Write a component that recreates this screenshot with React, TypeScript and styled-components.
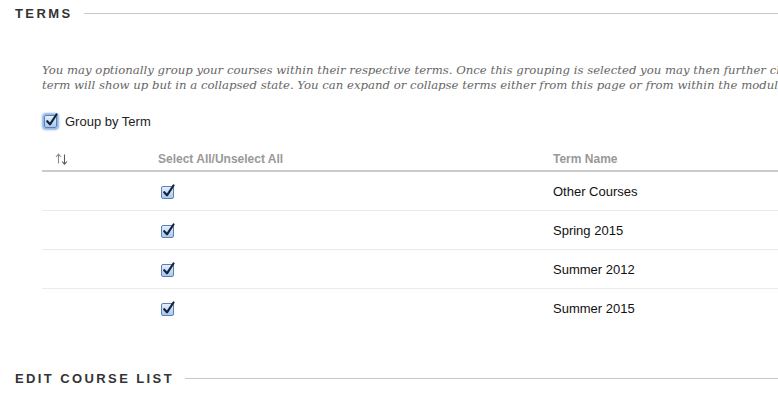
import React from "react";
import styled, { createGlobalStyle } from "styled-components";

const Global = createGlobalStyle`
  html, body { margin: 0; padding: 0; background: #fff; }
  body { width: 778px; height: 395px; overflow: hidden; font-family: "Liberation Sans", Arial, sans-serif; }
`;

const Page = styled.div`
  width: 778px;
  overflow: hidden;
  padding-top: 6px;
`;

const Section = styled.section`
  display: flex;
  flex-direction: column;
`;

const SectionHead = styled.div`
  display: flex;
  align-items: center;
  gap: 11px;
  padding-left: 15px;
  height: 16px;
`;

const SectionTitle = styled.h2`
  margin: 0;
  font-family: "Liberation Sans", Arial, sans-serif;
  font-weight: bold;
  font-size: 13px;
  letter-spacing: 2.4px;
  color: #333;
  white-space: nowrap;
  line-height: 16px;
`;

const Rule = styled.div`
  flex: 1;
  height: 1px;
  background: #c8c8c8;
  margin-top: -1px;
`;

const Body = styled.div`
  padding-left: 42px;
  width: 760px;
`;

const Description = styled.p`
  margin: 41px 0 0;
  font-family: "DejaVu Serif", Georgia, serif;
  font-style: italic;
  font-size: 11.7px;
  line-height: 15px;
  color: #666;
  white-space: nowrap;
`;

const CheckLabel = styled.label`
  display: flex;
  align-items: center;
  gap: 8px;
  margin-top: 20px;
  margin-left: 2px;
  font-size: 13px;
  color: #222;
  height: 16px;
`;

const Box = styled.span<{ $focus?: boolean }>`
  position: relative;
  display: inline-block;
  width: 11px;
  height: 11px;
  border: 1px solid #5b7fb3;
  border-radius: 2px;
  background: linear-gradient(#e4effc, #a9c9ef);
  box-shadow: ${(p) => (p.$focus ? "0 0 2px 2px #8fb4e6" : "none")};
  flex: none;
`;

const Tick = styled.svg`
  position: absolute;
  left: 0px;
  top: -3px;
  width: 13px;
  height: 14px;
`;

const Check = ({ focus }: { focus?: boolean }) => (
  <Box $focus={focus}>
    <Tick viewBox="0 0 13 14">
      <path d="M2.2 8.2 L5 11.3 L11.5 1.5" fill="none" stroke="#15253f" strokeWidth="2.2" strokeLinecap="round" strokeLinejoin="round" />
    </Tick>
  </Box>
);

const Table = styled.div`
  margin-top: 15px;
  display: grid;
  grid-template-columns: 116px 395px 1fr;
`;

const HeadRow = styled.div`
  display: contents;
`;

const HeadCell = styled.div`
  box-sizing: border-box;
  height: 28px;
  padding-top: 3px;
  border-bottom: 2px solid #cbcbcb;
  display: flex;
  align-items: center;
  font-size: 12px;
  font-weight: bold;
  color: #999;
`;

const SortCell = styled(HeadCell)`
  padding-left: 13px;
`;

const Row = styled.div`
  display: contents;
`;

const Cell = styled.div<{ $last?: boolean }>`
  height: 39px;
  box-sizing: border-box;
  border-bottom: 1px solid ${(p) => (p.$last ? "transparent" : "#ebebeb")};
  display: flex;
  align-items: center;
  font-size: 13px;
  color: #111;
`;

const CheckCell = styled(Cell)`
  padding-left: 3px;
  padding-top: 2px;
`;

const SortIcon = () => (
  <svg width="13" height="12" viewBox="0 0 13 12">
    <path d="M3.5 10.5 V1.5 M1 4 L3.5 1.2 L6 4" fill="none" stroke="#8a8a8a" strokeWidth="1.1" />
    <path d="M9.5 1.5 V11 M7 8.5 L9.5 11.2 L12 8.5" fill="none" stroke="#5a5a5a" strokeWidth="1.1" />
  </svg>
);

const terms = ["Other Courses", "Spring 2015", "Summer 2012", "Summer 2015"];

const SecondSection = styled(Section)`
  margin-top: 43px;
`;

export default function App() {
  return (
    <>
      <Global />
      <Page>
        <Section>
          <SectionHead>
            <SectionTitle>TERMS</SectionTitle>
            <Rule />
          </SectionHead>
          <Body>
            <Description>
              You may optionally group your courses within their respective terms. Once this grouping is selected you may then further choose which terms to show or hide. A hidden
              <br />
              term will show up but in a collapsed state. You can expand or collapse terms either from this page or from within the module itself.
            </Description>
            <CheckLabel>
              <Check focus />
              Group by Term
            </CheckLabel>
            <Table>
              <HeadRow>
                <SortCell>
                  <SortIcon />
                </SortCell>
                <HeadCell>Select All/Unselect All</HeadCell>
                <HeadCell>Term Name</HeadCell>
              </HeadRow>
              {terms.map((t, i) => {
                const last = i === terms.length - 1;
                return (
                  <Row key={t}>
                    <Cell $last={last} />
                    <CheckCell $last={last}>
                      <Check />
                    </CheckCell>
                    <Cell $last={last}>{t}</Cell>
                  </Row>
                );
              })}
            </Table>
          </Body>
        </Section>
        <SecondSection>
          <SectionHead>
            <SectionTitle>EDIT COURSE LIST</SectionTitle>
            <Rule />
          </SectionHead>
        </SecondSection>
      </Page>
    </>
  );
}
